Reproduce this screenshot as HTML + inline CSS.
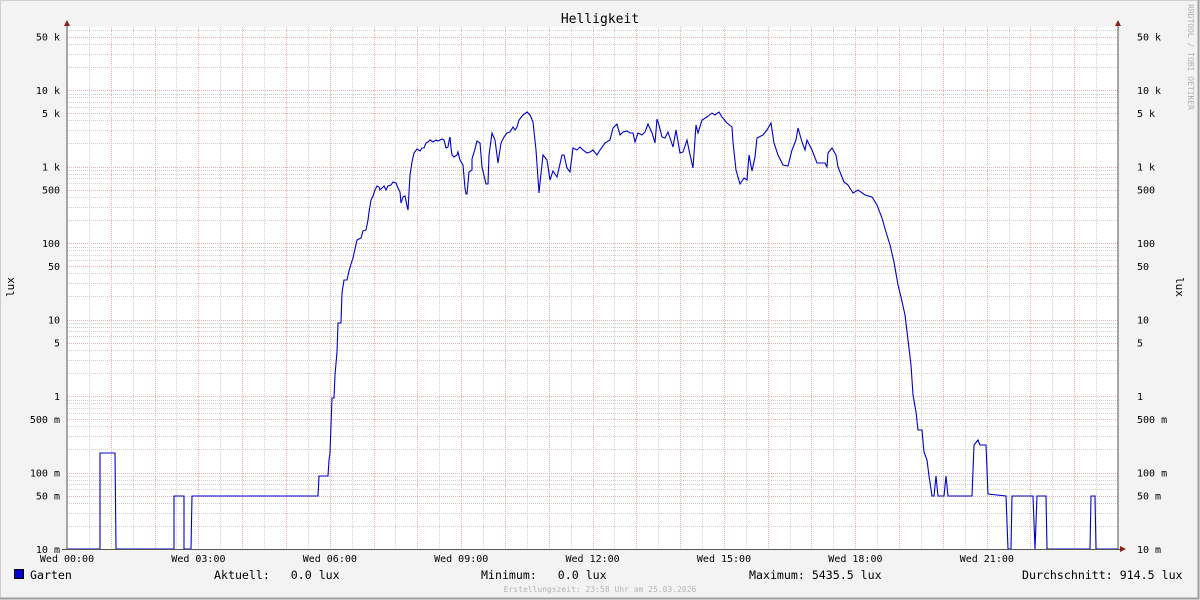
<!DOCTYPE html>
<html><head><meta charset="utf-8"><style>
html,body{margin:0;padding:0;background:#F3F3F3;}
svg{display:block}
text{font-family:"DejaVu Sans Mono","Liberation Mono",monospace;fill:#000}
</style></head><body>
<svg id="s" width="1200" height="600" xmlns="http://www.w3.org/2000/svg">
<rect x="0" y="0" width="1200" height="600" fill="#F3F3F3"/>
<path d="M0.5 599V0.5H1199" stroke="#CFCFCF" fill="none"/>
<path d="M0 598.5H1198.5V0" stroke="#9E9E9E" stroke-width="2" fill="none"/>
<rect x="67" y="27" width="1051" height="522" fill="#fff"/>
<g id="grid"></g>
<polyline id="line" fill="none" stroke="#0000CC" stroke-width="1.1" points=""/>
<path d="M67 22V549.5M1118 22V549.5M62 549.5H1123" stroke="#555" stroke-width="1" fill="none"/>
<path d="M64 26L67 20L70 26Z M1115 26L1118 20L1121 26Z M1120 546L1126 549L1120 552Z" fill="#8B1E1E"/>
<text x="600" y="23" font-size="13" text-anchor="middle">Helligkeit</text>
<g id="labels" font-size="10"></g>
<text transform="translate(14,287) rotate(-90)" font-size="11" text-anchor="middle">lux</text>
<text transform="translate(1176,287) rotate(90)" font-size="11" text-anchor="middle">lux</text>
<text transform="translate(1188,4) rotate(90)" font-size="8" style="fill:#B0B0B0">RRDTOOL / TOBI OETIKER</text>
<rect x="14.5" y="569.5" width="9" height="9" fill="#0000CC" stroke="#000"/>
<g font-size="11.6">
<text x="30" y="579">Garten</text>
<text x="214" y="579" xml:space="preserve">Aktuell:   0.0 lux</text>
<text x="481" y="579" xml:space="preserve">Minimum:   0.0 lux</text>
<text x="749" y="579" xml:space="preserve">Maximum: 5435.5 lux</text>
<text x="1022" y="579" xml:space="preserve">Durchschnitt: 914.5 lux</text>
</g>
<text x="600" y="592" font-size="8" text-anchor="middle" style="fill:#B5B5B5">Erstellungszeit: 23:58 Uhr am 25.03.2026</text>
</svg>
<script>
var NS="http://www.w3.org/2000/svg",g=document.getElementById('grid'),L=document.getElementById('labels');
function ln(x1,y1,x2,y2,c){var e=document.createElementNS(NS,'line');e.setAttribute('x1',x1);e.setAttribute('y1',y1);e.setAttribute('x2',x2);e.setAttribute('y2',y2);e.setAttribute('stroke',c);e.setAttribute('stroke-dasharray','1,1');g.appendChild(e);}
function tx(x,y,s,a){var e=document.createElementNS(NS,'text');e.setAttribute('x',x);e.setAttribute('y',y);e.setAttribute('text-anchor',a);e.textContent=s;L.appendChild(e);}
function Y(v){return 549-76.5*(Math.log10(v)+2);}
for(var d=-2;d<5;d++){for(var m=1;m<10;m++){var v=m*Math.pow(10,d);var y=Math.round(Y(v))+0.5;if(y<27||y>549)continue;if(m==1&&d==-2)continue;ln(67,y,1118,y,(m==1||m==5)?'#E6B0B0':'#D0D0D0');}}
for(var h=0;h<48;h++){var x=Math.round(67+h*1051/48)+0.5;if(h==0)continue;ln(x,27,x,549,h%2==0?'#E6B0B0':'#D0D0D0');}
var lab=[[50000,'50 k'],[10000,'10 k'],[5000,'5 k'],[1000,'1 k'],[500,'500'],[100,'100'],[50,'50'],[10,'10'],[5,'5'],[1,'1'],[0.5,'500 m'],[0.1,'100 m'],[0.05,'50 m'],[0.01,'10 m']];
lab.forEach(function(a){var y=Y(a[0])+4;tx(60,y,a[1],'end');tx(1137,y,a[1],'start');});
['Wed 00:00','Wed 03:00','Wed 06:00','Wed 09:00','Wed 12:00','Wed 15:00','Wed 18:00','Wed 21:00'].forEach(function(s,i){tx(67+i*131.4,562,s,'middle');});
var p="67,549 100,549 100,453 115,453 116,549 174,549 174,496 184,496 184,549 191,549 192,496 318,496 319,476 328,476 329,460 330,453 332,398 334,398 335,375 337,352 338,323 341,323 342,293 344,280 347,280 349,271 351,264 353,258 355,249 357,240 361,238 363,231 366,230 368,220 369,212 371,200 373,196 375,190 377,186 379,187 380,190 384,186 386,190 388,186 391,185 393,182 396,183 398,188 400,192 401,203 403,197 405,196 407,206 408,210 410,175 412,162 414,153 417,149 420,151 422,148 424,148 426,143 428,142 430,140 433,142 436,140 438,141 442,139 444,140 446,148 448,147 449,141 450,137 451,148 452,155 454,157 457,155 458,152 460,160 463,165 465,188 466,194 467,194 469,172 472,170 472,159 475,149 477,141 480,143 482,167 486,184 488,184 489,155 492,133 495,140 498,163 501,143 504,137 507,133 510,132 513,127 515,130 517,127 519,120 523,115 527,112 530,115 533,122 536,150 539,193 540,183 543,155 547,160 550,180 553,171 557,177 562,155 564,155 567,168 570,172 573,148 577,150 580,147 583,150 587,153 590,152 593,150 597,155 600,150 605,143 610,140 613,128 617,124 620,135 623,132 627,131 630,133 633,133 635,142 638,133 642,135 645,132 648,124 652,133 655,143 657,119 659,125 662,137 665,138 668,132 673,147 676,130 680,153 683,152 687,140 689,150 693,168 696,125 698,133 702,120 707,117 712,113 715,115 719,112 722,117 727,123 732,127 733,142 736,170 740,184 744,178 747,180 749,155 752,171 755,157 757,138 763,135 767,130 771,123 774,143 778,155 783,165 788,166 792,150 796,140 798,128 802,142 805,150 807,140 812,150 817,163 825,163 827,167 828,153 832,148 836,155 838,167 844,182 848,185 853,193 858,190 865,195 872,197 877,205 882,218 886,232 890,245 894,262 898,285 901,297 905,315 908,340 911,365 913,395 916,412 918,430 922,430 924,452 927,460 929,476 932,496 934,496 936,476 938,496 944,496 946,476 948,496 972,496 974,445 978,440 980,445 986,445 988,494 1006,496 1008,549 1011,549 1012,496 1033,496 1035,549 1037,496 1046,496 1047,549 1090,549 1091,496 1095,496 1096,549 1118,549";
document.getElementById('line').setAttribute('points',p);
</script>
</body></html>
